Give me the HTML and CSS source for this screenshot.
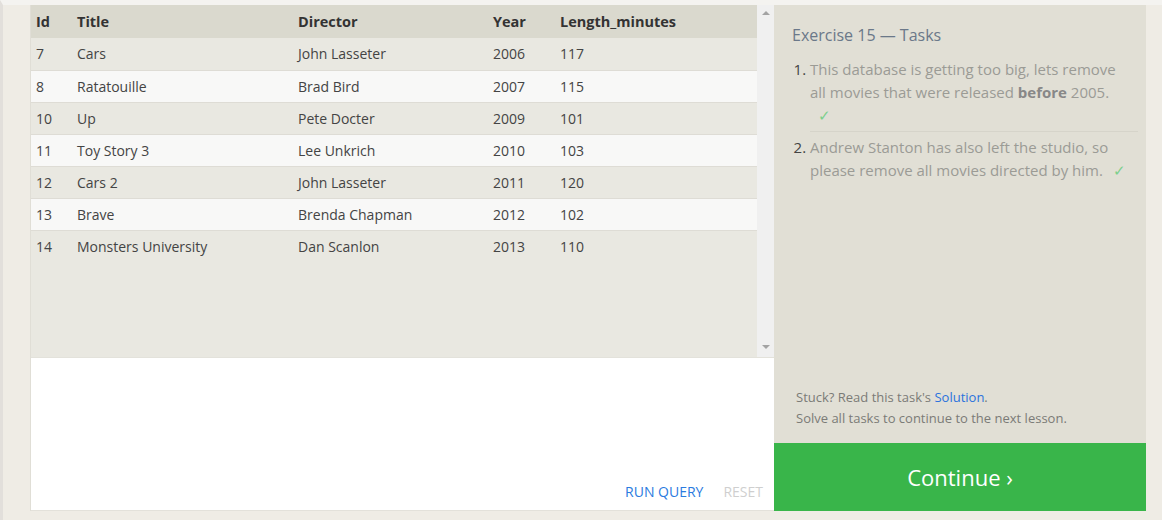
FILE: index.html
```html
<!DOCTYPE html>
<html>
<head>
<meta charset="utf-8">
<link rel="stylesheet" href="styles.css">
</head>
<body>
<div class="page">
  <div class="left">
    <div class="results">
      <div class="table-wrap">
        <table class="tbl">
          <thead>
            <tr><th class="c-id">Id</th><th class="c-title">Title</th><th class="c-dir">Director</th><th class="c-year">Year</th><th>Length_minutes</th></tr>
          </thead>
          <tbody>
            <tr><td>7</td><td>Cars</td><td>John Lasseter</td><td>2006</td><td>117</td></tr>
            <tr><td>8</td><td>Ratatouille</td><td>Brad Bird</td><td>2007</td><td>115</td></tr>
            <tr><td>10</td><td>Up</td><td>Pete Docter</td><td>2009</td><td>101</td></tr>
            <tr><td>11</td><td>Toy Story 3</td><td>Lee Unkrich</td><td>2010</td><td>103</td></tr>
            <tr><td>12</td><td>Cars 2</td><td>John Lasseter</td><td>2011</td><td>120</td></tr>
            <tr><td>13</td><td>Brave</td><td>Brenda Chapman</td><td>2012</td><td>102</td></tr>
            <tr><td>14</td><td>Monsters University</td><td>Dan Scanlon</td><td>2013</td><td>110</td></tr>
          </tbody>
        </table>
      </div>
      <div class="scrollbar">
        <span class="arrow up"></span>
        <span class="arrow down"></span>
      </div>
    </div>
    <div class="editor">
      <div class="actions">
        <span class="run">RUN QUERY</span>
        <span class="reset">RESET</span>
      </div>
    </div>
  </div>
  <div class="right">
    <div class="tasks">
      <h2 class="tasks-title">Exercise 15 — Tasks</h2>
      <ol class="task-list">
        <li>This database is getting too big, lets remove all movies that were released <b>before</b> 2005. <span class="check first">✓</span></li>
        <li>Andrew Stanton has also left the studio, so please remove all movies directed by him.&nbsp;<span class="check">✓</span></li>
      </ol>
      <div class="help">
        <p>Stuck? Read this task's <a class="sol">Solution</a>.</p>
        <p>Solve all tasks to continue to the next lesson.</p>
      </div>
    </div>
    <div class="continue">Continue ›</div>
  </div>
</div>
</body>
</html>
```
FILE: styles.css
```css
html, body {
  margin: 0;
  padding: 0;
}
body {
  background: #efece5;
  font-family: "Open Sans", "Noto Sans", sans-serif;
  width: 1162px;
  height: 520px;
  overflow: hidden;
  border-left: 3px solid #e2dfdb;
  box-sizing: border-box;
  border-top: 5px solid #f4f3f0;
}
.page {
  display: flex;
  padding: 0 16px 9px 27px;
  height: 515px;
  box-sizing: border-box;
}
.left {
  width: 744px;
  display: flex;
  flex-direction: column;
  border-left: 1px solid #e0ded6;
  box-sizing: border-box;
}
.results {
  height: 353px;
  display: flex;
  background: #e9e8e1;
  border-bottom: 1px solid #e3e2db;
  box-sizing: border-box;
}
.table-wrap {
  flex: 1;
}
.tbl {
  width: 100%;
  border-collapse: collapse;
  font-size: 14px;
  color: #444;
}
.tbl th {
  background: #dad9ce;
  text-align: left;
  font-weight: 700;
  color: #333;
  height: 33px;
  padding: 0 0 0 5px;
  font-size: 14.5px;
}
.tbl td {
  height: 31px;
  padding: 0 0 0 5px;
  border-bottom: 1px solid #dedcd5;
}
.tbl tbody tr:first-child td {
  height: 31px;
  padding-bottom: 1px;
}
.tbl tbody tr:nth-child(even) td {
  background: #f8f8f7;
}
.tbl tbody tr:last-child td {
  border-bottom: none;
}
.c-id { width: 36px; }
.c-title { width: 216px; }
.c-dir { width: 190px; }
.c-year { width: 62px; }
.scrollbar {
  width: 17px;
  background: #f0f0f0;
  display: flex;
  flex-direction: column;
  justify-content: space-between;
  align-items: center;
  padding: 6px 0 8px;
  box-sizing: border-box;
}
.arrow {
  width: 0;
  height: 0;
  border-left: 4px solid transparent;
  border-right: 4px solid transparent;
}
.arrow.up { border-bottom: 4px solid #a3a3a3; }
.arrow.down { border-top: 4px solid #a3a3a3; }
.editor {
  flex: 1;
  background: #fff;
  display: flex;
  align-items: flex-end;
  justify-content: flex-end;
  border-bottom: 1px solid #e3e1da;
}
.actions {
  display: flex;
  gap: 20px;
  padding: 0 11px 9px 0;
  font-size: 14px;
}
.run { color: #2b7be0; }
.reset { color: #cfcfcf; }
.right {
  width: 372px;
  display: flex;
  flex-direction: column;
}
.tasks {
  flex: 1;
  background: #e1dfd5;
  padding: 0 8px 0 18px;
  display: flex;
  flex-direction: column;
}
.tasks-title {
  font-size: 16px;
  font-weight: 400;
  color: #6b7889;
  margin: 19px 0 12px;
}
.task-list {
  margin: 0;
  padding: 0 0 0 18px;
  font-size: 15px;
  line-height: 23px;
  color: #9b9b95;
}
.task-list li {
  padding: 0 12px 4px 0;
}
.task-list li::marker {
  color: #444;
}
.task-list li + li {
  border-top: 1px solid #d6d4ca;
  padding-top: 4px;
}
.task-list b { color: #888; }
.check {
  display: inline-block;
  color: #7ccf8c;
  margin-left: 6px;
}
.check.first { margin-left: 8px; }
.help {
  margin-top: auto;
  padding: 0 0 14px 4px;
  font-size: 13px;
  line-height: 21px;
  color: #7b7b77;
}
.help p { margin: 0; }
.sol { color: #2a72dd; }
.continue {
  height: 68px;
  background: #39b54a;
  color: #fff;
  font-size: 22px;
  display: flex;
  align-items: center;
  justify-content: center;
}
```
